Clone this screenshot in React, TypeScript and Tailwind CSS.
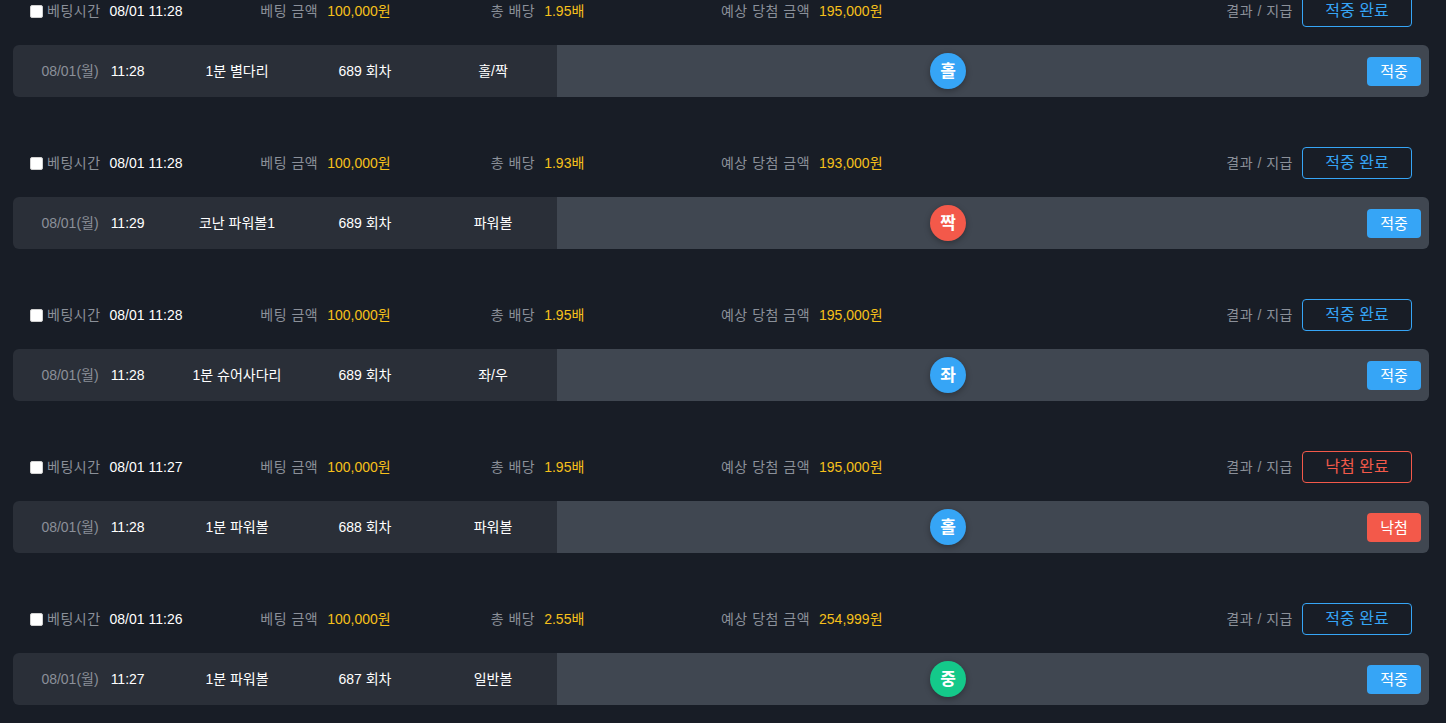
import React from 'react';

type Bet = {
  betTime: string;
  odds: string;
  payout: string;
  won: boolean;
  time: string;
  game: string;
  round: string;
  market: string;
  pick: string;
  pickColor: 'blue' | 'red' | 'green';
};

const bets: Bet[] = [
  { betTime: '08/01 11:28', odds: '1.95배', payout: '195,000원', won: true, time: '11:28', game: '1분 별다리', round: '689 회차', market: '홀/짝', pick: '홀', pickColor: 'blue' },
  { betTime: '08/01 11:28', odds: '1.93배', payout: '193,000원', won: true, time: '11:29', game: '코난 파워볼1', round: '689 회차', market: '파워볼', pick: '짝', pickColor: 'red' },
  { betTime: '08/01 11:28', odds: '1.95배', payout: '195,000원', won: true, time: '11:28', game: '1분 슈어사다리', round: '689 회차', market: '좌/우', pick: '좌', pickColor: 'blue' },
  { betTime: '08/01 11:27', odds: '1.95배', payout: '195,000원', won: false, time: '11:28', game: '1분 파워볼', round: '688 회차', market: '파워볼', pick: '홀', pickColor: 'blue' },
  { betTime: '08/01 11:26', odds: '2.55배', payout: '254,999원', won: true, time: '11:27', game: '1분 파워볼', round: '687 회차', market: '일반볼', pick: '중', pickColor: 'green' },
];

const pickBg = {
  blue: 'bg-[#36a5f6]',
  red: 'bg-[#f3594a]',
  green: 'bg-[#14c98a]',
};

function BetItem({ bet }: { bet: Bet }) {
  return (
    <div className="mb-[50px]">
      {/* summary row */}
      <div className="grid h-[32px] grid-cols-6 items-center px-[17px] text-[14px]">
        <div className="flex items-center">
          <input
            type="checkbox"
            className="m-0 h-[13px] w-[13px] appearance-none rounded-[2px] border border-[#d0d0d0] bg-white"
          />
          <span className="ml-[4px] tracking-[0.5px] text-[#8b9099]">베팅시간</span>
          <span className="ml-[9px] text-white">{bet.betTime}</span>
        </div>
        <div className="flex items-center">
          <span className="tracking-[0.5px] text-[#8b9099]">베팅 금액</span>
          <span className="ml-[9px] text-[#f6c01b]">100,000원</span>
        </div>
        <div className="flex items-center">
          <span className="tracking-[0.5px] text-[#8b9099]">총 배당</span>
          <span className="ml-[9px] text-[#f6c01b]">{bet.odds}</span>
        </div>
        <div className="flex items-center">
          <span className="tracking-[0.5px] text-[#8b9099]">예상 당첨 금액</span>
          <span className="ml-[9px] text-[#f6c01b]">{bet.payout}</span>
        </div>
        <div className="col-span-2 flex items-center justify-end">
          <span className="tracking-[0.5px] text-[#8b9099]">결과 / 지급</span>
          <button
            className={`ml-[9px] h-[32px] w-[110px] rounded-[4px] border text-[16px] ${
              bet.won ? 'border-[#36a5f6] text-[#36a5f6]' : 'border-[#f3594a] text-[#f3594a]'
            }`}
          >
            {bet.won ? '적중 완료' : '낙첨 완료'}
          </button>
        </div>
      </div>

      {/* detail bar */}
      <div className="mt-[18px] flex h-[52px] overflow-hidden rounded-[6px] text-[14px]">
        <div className="flex w-[544px] items-center bg-[#2a2f38]">
          <div className="flex w-[160px] items-center justify-center gap-[12px]">
            <span className="text-[#8b9099]">08/01(월)</span>
            <span className="text-white">{bet.time}</span>
          </div>
          <div className="w-[128px] text-center text-white">{bet.game}</div>
          <div className="w-[128px] text-center text-white">{bet.round}</div>
          <div className="w-[128px] text-center text-white">{bet.market}</div>
        </div>
        <div className="flex flex-1 items-center bg-[#404751]">
          <div className="flex flex-1 justify-center">
            <div
              className={`flex h-[36px] w-[36px] items-center justify-center rounded-full text-[17px] font-bold text-white shadow-[0_2px_6px_rgba(0,0,0,0.3)] ${pickBg[bet.pickColor]}`}
            >
              {bet.pick}
            </div>
          </div>
          <div className="flex w-[90px] justify-end pr-[8px]">
            <span
              className={`flex h-[29px] w-[54px] items-center justify-center rounded-[4px] text-[15px] text-white ${
                bet.won ? 'bg-[#36a5f6]' : 'bg-[#f3594a]'
              }`}
            >
              {bet.won ? '적중' : '낙첨'}
            </span>
          </div>
        </div>
      </div>
    </div>
  );
}

export default function App() {
  return (
    <div
      className="min-h-screen overflow-hidden bg-[#181d26] leading-none"
      style={{ fontFamily: '"Liberation Sans", "Noto Sans CJK KR", sans-serif' }}
    >
      <div className="-mt-[5px] pl-[13px] pr-[17px]">
        {bets.map((bet, i) => (
          <BetItem key={i} bet={bet} />
        ))}
      </div>
    </div>
  );
}
